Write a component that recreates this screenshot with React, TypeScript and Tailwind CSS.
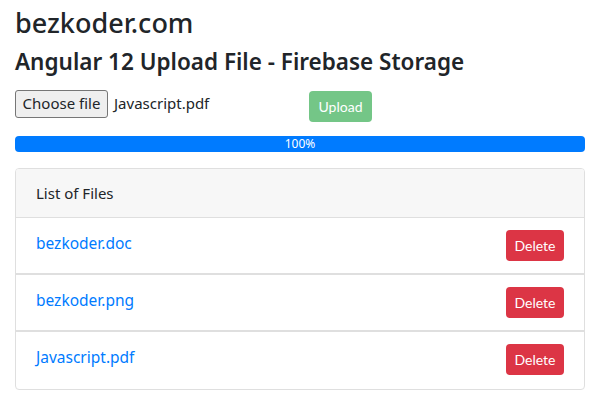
export default function App() {
  const files = ["bezkoder.doc", "bezkoder.png", "Javascript.pdf"];
  return (
    <div className="w-[600px] h-[400px] bg-white overflow-hidden px-[15px] text-[#212529]" style={{ fontFamily: '"Noto Sans", sans-serif' }}>
      <div className="pt-[6px] text-[27px] leading-[34px] font-medium">bezkoder.com</div>
      <div className="mt-[7px] text-[22.5px] leading-[30px] font-semibold">Angular 12 Upload File - Firebase Storage</div>
      <div className="mt-[10px] flex items-center h-[33px]">
        <div className="flex items-center w-[294px]">
          <div className="h-[28px] w-[93px] border border-[#767676] rounded-[3px] bg-[#efefef] flex items-center justify-center text-[15px]">Choose file</div>
          <span className="ml-[6px] text-[15px]">Javascript.pdf</span>
        </div>
        <div className="h-[31px] w-[63px] rounded-[4px] bg-[#74c687] text-white text-[14px] flex items-center justify-center mt-[6px]" style={{ fontFamily: 'Lato, sans-serif' }}>Upload</div>
      </div>
      <div className="mt-[16px] h-[16px] rounded-[4px] bg-[#007bff] text-white text-[12px] leading-[16px] text-center">100%</div>
      <div className="mt-[16px] border border-[#dfdfdf] rounded-[4px] overflow-hidden">
        <div className="h-[49px] bg-[#f7f7f7] border-b border-[#dfdfdf] flex items-center px-[20px] text-[15px]">List of Files</div>
        {files.map((f, i) => (
          <div key={f} className={`h-[57px] flex items-start justify-between px-[20px] ${i < 2 ? "border-b-2 border-[#dfdfdf]" : ""}`}>
            <span className="text-[#007bff] text-[15.5px] mt-[14px]">{f}</span>
            <div className="mt-[12px] h-[31px] w-[58px] rounded-[4px] bg-[#dc3545] text-white text-[14px] flex items-center justify-center" style={{ fontFamily: 'Lato, sans-serif' }}>Delete</div>
          </div>
        ))}
      </div>
    </div>
  );
}
